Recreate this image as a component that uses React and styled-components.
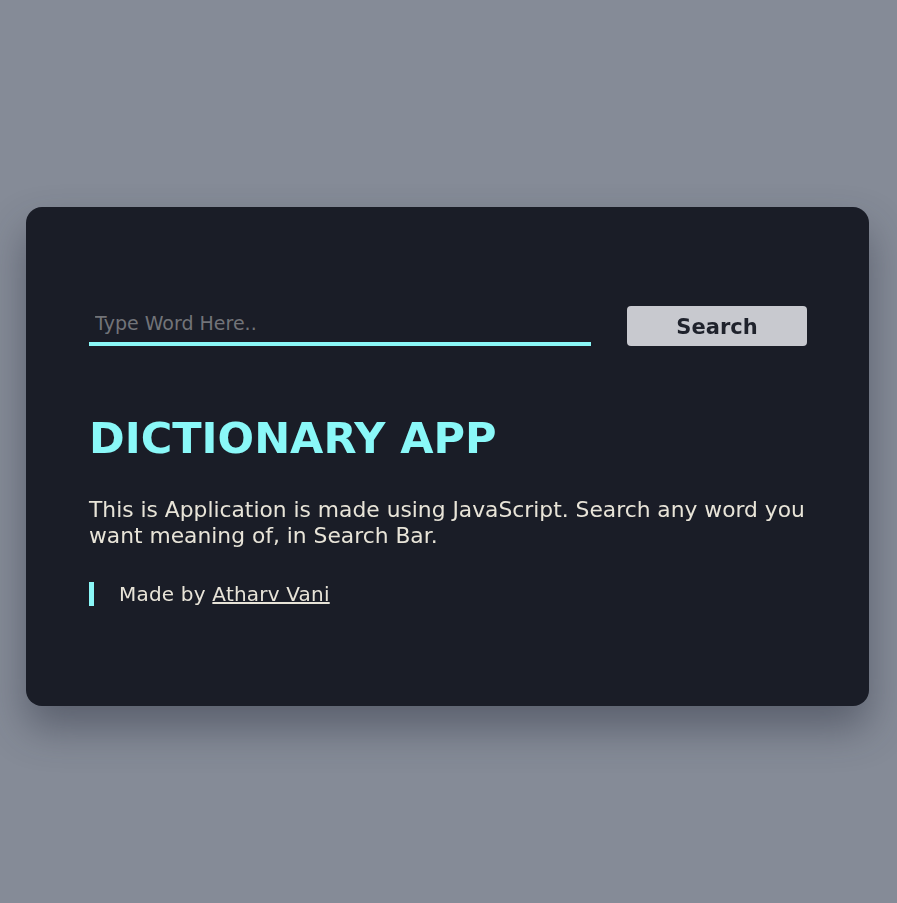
import React from 'react'
import styled, { createGlobalStyle } from 'styled-components'

const GlobalStyle = createGlobalStyle`
  * { box-sizing: border-box; }
  body {
    margin: 0;
    background: #858b97;
    font-family: "DejaVu Sans", "Open Sans", sans-serif;
  }
`

const Page = styled.main`
  min-height: 100vh;
  display: flex;
  align-items: center;
  justify-content: center;
  padding: 10px 28px 0 26px;
`

const Card = styled.section`
  width: 843px;
  height: 499px;
  background: #1a1d27;
  border-radius: 16px;
  box-shadow: 0 22px 40px rgba(40, 44, 60, 0.45);
  padding: 98px 62px 0 63px;
`

const SearchRow = styled.div`
  display: flex;
  align-items: flex-end;
  justify-content: space-between;
`

const WordInput = styled.input`
  width: 502px;
  height: 41px;
  background: transparent;
  border: none;
  border-bottom: 4px solid #8af7f7;
  outline: none;
  color: #e8e4d8;
  font-family: inherit;
  font-size: 19px;
  padding: 0 0 2px 6px;
  &::placeholder { color: #727479; }
`

const SearchButton = styled.button`
  width: 180px;
  height: 40px;
  border: none;
  border-radius: 4px;
  background: #c8c9cf;
  color: #1f222c;
  font-family: inherit;
  font-weight: 700;
  font-size: 21px;
  padding: 2px 0 0;
  cursor: pointer;
`

const Title = styled.h1`
  margin: 67px 0 0;
  color: #8af8f8;
  font-weight: 700;
  font-size: 43px;
  line-height: 50px;
`

const Intro = styled.p`
  margin: 34px 0 0;
  color: #e8e4d8;
  font-size: 21.8px;
  line-height: 26px;
`

const Credit = styled.p`
  margin: 33px 0 0;
  padding-left: 25px;
  border-left: 5px solid #8af7f7;
  color: #e8e4d8;
  font-size: 20px;
  letter-spacing: 0.2px;
  line-height: 24px;
  a { color: inherit; }
`

export default function App() {
  return (
    <>
      <GlobalStyle />
      <Page>
        <Card>
          <SearchRow>
            <WordInput type="text" placeholder="Type Word Here.." autoFocus />
            <SearchButton>Search</SearchButton>
          </SearchRow>
          <Title>DICTIONARY APP</Title>
          <Intro>
            This is Application is made using JavaScript. Search any word you want meaning of, in Search Bar.
          </Intro>
          <Credit>
            Made by <a href="#">Atharv Vani</a>
          </Credit>
        </Card>
      </Page>
    </>
  )
}
